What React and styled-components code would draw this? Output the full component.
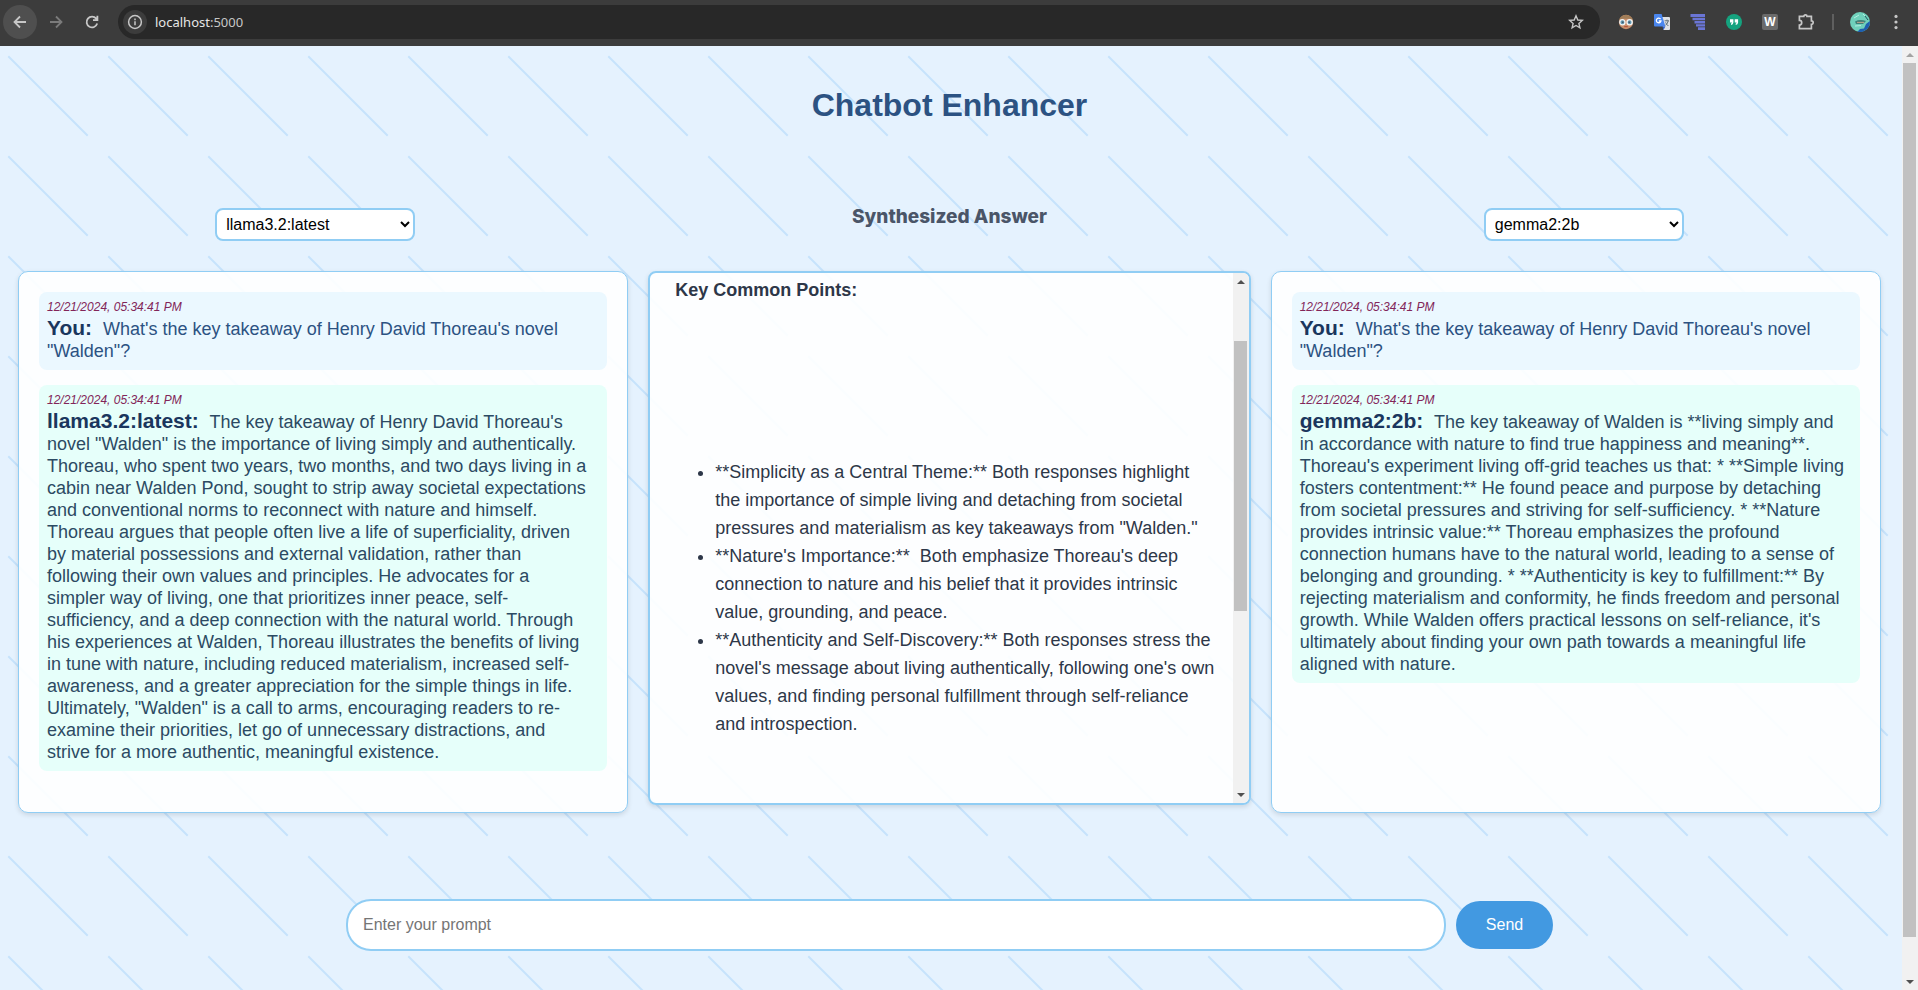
import React from "react";
import styled, { createGlobalStyle, css } from "styled-components";

const tile = encodeURIComponent(
  '<svg xmlns="http://www.w3.org/2000/svg" width="100" height="100"><path d="M9 11L87 89" stroke="#c6e3fc" stroke-width="2" stroke-linecap="square" fill="none"/></svg>'
);

const Global = createGlobalStyle`
  *, *::before, *::after { box-sizing: border-box; }
  body { margin: 0; font-family: "Liberation Sans", Arial, sans-serif; }
  h1, h2, h3, p, ul { margin: 0; padding: 0; }
  button, input, select { font-family: inherit; }
`;

const Window = styled.div`
  height: 100vh;
  display: flex;
  flex-direction: column;
  overflow: hidden;
`;

const Toolbar = styled.header`
  flex: none;
  height: 46px;
  padding: 5px 4px 7px 3px;
  display: flex;
  align-items: center;
  background: #3c3c3c;
  color: #c7c7c7;
`;

const NavButton = styled.button`
  width: 34px;
  height: 34px;
  margin-right: 2px;
  padding: 0;
  border: 0;
  border-radius: 17px;
  display: grid;
  place-items: center;
  background: ${(p) => (p.$active ? "#4f4f4f" : "transparent")};
  color: ${(p) => (p.$muted ? "#7b7b7b" : "#c7c7c7")};
`;

const AddressBar = styled.div`
  flex: 1;
  height: 34px;
  margin: 0 8px 0 7px;
  padding: 0 6px 0 5px;
  display: flex;
  align-items: center;
  gap: 8px;
  border-radius: 17px;
  background: #282828;
`;

const SiteInfo = styled.button`
  width: 24px;
  height: 24px;
  padding: 0;
  border: 0;
  border-radius: 12px;
  display: grid;
  place-items: center;
  background: #3c3c3c;
  color: #c7c7c7;
`;

const Url = styled.span`
  flex: 1;
  font: 13px/18px "Noto Sans", sans-serif;
  color: #e6e6e6;
  span { color: #c7c7c7; }
`;

const ToolButton = styled.button`
  width: 36px;
  height: 34px;
  padding: 0;
  border: 0;
  display: grid;
  place-items: center;
  background: transparent;
  color: #c7c7c7;
`;

const Divider = styled.span`
  width: 2px;
  height: 16px;
  margin: 0 8px;
  background: #5f5f5f;
`;

const Viewport = styled.div`
  flex: 1;
  min-height: 0;
  display: flex;
`;

const Page = styled.main`
  flex: 1;
  min-width: 0;
  overflow: hidden;
  padding: 41px 21px 39px 18px;
  background: #e5f2fe url("data:image/svg+xml,${tile}");
`;

const Title = styled.h1`
  font-size: 32px;
  line-height: 36px;
  text-align: center;
  color: #2c5282;
`;

const Headings = styled.div`
  display: grid;
  grid-template-columns: repeat(3, minmax(0, 1fr));
  gap: 40px;
  justify-items: center;
  align-items: start;
  margin-top: 85px;
`;

const ModelSelect = styled.select`
  width: 200px;
  height: 33px;
  padding: 4px 4px 4px 5px;
  border: 2px solid #90cdf4;
  border-radius: 8px;
  background-color: #fff;
  color: #000;
  font-size: 16px;
`;

const Subtitle = styled.h2`
  font-family: Inter, "Liberation Sans", sans-serif;
  font-size: 19px;
  font-weight: 800;
  line-height: 18px;
  color: #4a5568;
`;

const Panels = styled.div`
  display: grid;
  grid-template-columns: minmax(0, 76fr) minmax(0, 75fr) minmax(0, 76fr);
  gap: 20px;
  align-items: start;
  margin-top: 30px;
`;

const panel = css`
  background: rgba(255, 255, 255, 0.9);
  border-color: #90cdf4;
  border-style: solid;
  box-shadow: 0 2px 5px rgba(0, 0, 0, 0.12);
`;

const ChatPanel = styled.section`
  ${panel}
  min-height: 542px;
  padding: 20px;
  border-width: 1px;
  border-radius: 10px;
  display: flex;
  flex-direction: column;
  gap: 15px;
`;

const Message = styled.article`
  padding: 8px 15px 8px 8px;
  border-radius: 8px;
  background: ${(p) => (p.$user ? "#ebf8ff" : "#e6fffa")};
  color: ${(p) => (p.$user ? "#2c5282" : "#2c4a63")};
  font-size: 18px;
  line-height: 22px;
`;

const Stamp = styled.time`
  display: block;
  margin-bottom: 3px;
  font-size: 12px;
  font-style: italic;
  line-height: 15px;
  color: #822659;
`;

const Sender = styled.strong`
  margin-right: 6px;
  font-size: 21px;
  line-height: 16px;
  color: #1a365d;
`;

const AnswerPanel = styled.section`
  ${panel}
  height: 534px;
  border-width: 2px;
  border-radius: 8px;
  display: flex;
  overflow: hidden;
`;

const Answer = styled.div`
  flex: 1;
  padding: 3px 14px 0 25px;
  font-size: 18px;
  line-height: 28px;
  color: #2d3748;
`;

const AnswerHeading = styled.h3`
  font-size: 18px;
  line-height: 28px;
`;

const Points = styled.ul`
  margin-top: 154px;
  padding-left: 40px;
`;

const ScrollTrack = styled.div`
  flex: none;
  width: 16px;
  display: flex;
  flex-direction: column;
  background: #f1f1f1;
`;

const Arrow = styled.span`
  flex: none;
  height: 17px;
  display: grid;
  place-items: center;
  &::before {
    content: "";
    border: 4px solid transparent;
    border-top-width: ${(p) => (p.$up ? 0 : 4)}px;
    border-bottom-width: ${(p) => (p.$up ? 4 : 0)}px;
    border-top-color: ${(p) => (p.$dim ? "#a3a3a3" : "#505050")};
    border-bottom-color: ${(p) => (p.$dim ? "#a3a3a3" : "#505050")};
  }
`;

const Space = styled.span`
  flex: ${(p) => p.$share} 1 0;
`;

const Thumb = styled.span`
  flex: ${(p) => p.$share} 1 0;
  margin: 0 2px 0 1px;
  background: #c1c1c1;
`;

const PromptForm = styled.form`
  max-width: 1207px;
  margin: 86px auto 0;
  display: flex;
  align-items: center;
  gap: 10px;
`;

const PromptInput = styled.input`
  flex: 1;
  min-width: 0;
  height: 52px;
  padding: 0 15px;
  border: 2px solid #90cdf4;
  border-radius: 25px;
  background: #fff;
  font-size: 16px;
  &::placeholder { color: #757575; }
`;

const SendButton = styled.button`
  width: 97px;
  height: 48px;
  border: 0;
  border-radius: 24px;
  background: #4299e1;
  color: #fff;
  font-size: 16px;
`;

const line = { fill: "none", stroke: "currentColor", strokeWidth: 1.8 };

const BackIcon = () => (
  <svg width="16" height="16" viewBox="0 0 16 16" {...line}>
    <path d="M14 8H3M8 2.5L2.5 8L8 13.5" />
  </svg>
);
const ForwardIcon = () => (
  <svg width="16" height="16" viewBox="0 0 16 16" {...line}>
    <path d="M2 8H13M8 2.5L13.5 8L8 13.5" />
  </svg>
);
const ReloadIcon = () => (
  <svg width="16" height="16" viewBox="0 0 16 16" {...line}>
    <path d="M13.2 9.6A5.4 5.4 0 1 1 12.2 4.6L13.6 6M13.4 1.8V6.2H9" />
  </svg>
);
const InfoIcon = () => (
  <svg width="16" height="16" viewBox="0 0 16 16" fill="none" stroke="currentColor" strokeWidth="1.5">
    <circle cx="8" cy="8" r="6.4" />
    <path d="M8 7.2V11.2M8 4.6V6.2" />
  </svg>
);
const StarIcon = () => (
  <svg width="16" height="16" viewBox="0 0 16 16" fill="none" stroke="currentColor" strokeWidth="1.4">
    <path d="M8 1.8L9.8 6L14.3 6.4L10.9 9.4L11.9 13.9L8 11.5L4.1 13.9L5.1 9.4L1.7 6.4L6.2 6Z" />
  </svg>
);
const FaceIcon = () => (
  <svg width="16" height="16" viewBox="0 0 16 16">
    <circle cx="8" cy="8" r="7.2" fill="#c98f6c" />
    <path d="M1 6.6A7.2 7.2 0 0 1 15 6.6L12 4.8H4Z" fill="#a07d58" />
    <circle cx="4.4" cy="8.2" r="2.6" fill="#5f95b0" stroke="#f4f4f4" strokeWidth="1.3" />
    <circle cx="11.6" cy="8.2" r="2.6" fill="#5f95b0" stroke="#f4f4f4" strokeWidth="1.3" />
    <circle cx="4.8" cy="8.2" r="0.8" fill="#3a4a55" />
    <circle cx="11.2" cy="8.2" r="0.8" fill="#3a4a55" />
    <path d="M6.2 12.6H9.8" stroke="#b5533c" strokeWidth="1.1" />
  </svg>
);
const TranslateIcon = () => (
  <svg width="16" height="16" viewBox="0 0 16 16">
    <path d="M7 3H15Q16 3 16 4V15Q16 16 15 16H9.5Z" fill="#dfe1e5" />
    <path d="M1 0H7.6L11.4 12.5H1Q0 12.5 0 11.5V1Q0 0 1 0Z" fill="#4a86ee" />
    <path d="M8.5 12.5H11.4L9.5 16Z" fill="#2f5fc4" />
    <path d="M6.6 5.2A2.3 2.3 0 1 0 6.9 7H4.8" fill="none" stroke="#fff" strokeWidth="1.3" />
    <path d="M10.6 6.8H15M13 5.6V6.8M14.2 7Q13.6 9.8 11.4 11.4M11.6 8.4Q12.6 10.6 14.4 12" fill="none" stroke="#607078" strokeWidth="1" />
  </svg>
);
const BarsIcon = () => (
  <svg width="16" height="16" viewBox="0 0 16 16" fill="#6a75d6">
    <path d="M0.5 0H15V3H0.5ZM2.5 3.8H15V6.2H2.5ZM4.5 7H15V9.4H4.5ZM6 10.2H15V12.4H6ZM8 13.2H15V16H8Z" />
  </svg>
);
const QuoteIcon = () => (
  <svg width="16" height="16" viewBox="0 0 16 16">
    <circle cx="8" cy="8" r="8" fill="#15a37f" />
    <path d="M4 5.2H7.4V8.4Q7.2 10.4 5 10.9V9.6Q5.8 9.3 5.9 8.4H4ZM8.7 5.2H12.1V8.4Q11.9 10.4 9.7 10.9V9.6Q10.5 9.3 10.6 8.4H8.7Z" fill="#fff" />
  </svg>
);
const PuzzleIcon = () => (
  <svg width="18" height="18" viewBox="0 0 18 18" fill="none" stroke="currentColor" strokeWidth="1.7">
    <path d="M2.4 3.4H6.8A1.6 1.6 0 0 1 10 3.4H14.4V7.8A1.6 1.6 0 0 1 14.4 11.4V15.6H2.4V12A2.3 2.3 0 0 0 2.4 7.4Z" />
  </svg>
);
const AvatarIcon = () => (
  <svg width="20" height="20" viewBox="0 0 20 20">
    <circle cx="10" cy="10" r="10" fill="#6fd0bb" />
    <path d="M19.9 9A10 10 0 0 1 7.5 19.7L10 17L14 16.5L16 12Z" fill="#1d5fb0" />
    <path d="M5 9.5Q10 7 16 9L13 12H6Z" fill="#3f7f78" />
    <path d="M7 10.4H14" stroke="#b9a98e" strokeWidth="1" />
    <path d="M4 6L9 3M13 2L16 5M5 14L11 13.6" stroke="#b4efe2" strokeWidth="1" />
    <path d="M15 4L18 8" stroke="#1f4f5c" strokeWidth="1" />
  </svg>
);
const DotsIcon = () => (
  <svg width="4" height="16" viewBox="0 0 4 16" fill="currentColor">
    <circle cx="2" cy="2.4" r="1.6" />
    <circle cx="2" cy="8" r="1.6" />
    <circle cx="2" cy="13.6" r="1.6" />
  </svg>
);

const LetterBadge = styled.span`
  width: 16px;
  height: 16px;
  border-radius: 2px;
  background: #6b6b6b;
  color: #fff;
  font: bold 12px/16px "Liberation Sans", sans-serif;
  text-align: center;
`;

const time = "12/21/2024, 05:34:41 PM";
const question = `What's the key takeaway of Henry David Thoreau's novel "Walden"?`;

const llamaReply = `The key takeaway of Henry David Thoreau's novel "Walden" is the importance of living simply and authentically. Thoreau, who spent two years, two months, and two days living in a cabin near Walden Pond, sought to strip away societal expectations and conventional norms to reconnect with nature and himself. Thoreau argues that people often live a life of superficiality, driven by material possessions and external validation, rather than following their own values and principles. He advocates for a simpler\u00a0way of living, one that prioritizes inner peace, self-sufficiency, and a deep connection with the natural world. Through his experiences at Walden, Thoreau illustrates the benefits of living in tune with nature, including reduced materialism, increased self-awareness, and a greater appreciation for the simple things in life. Ultimately, "Walden" is a call to arms, encouraging readers to re-examine their priorities, let go of unnecessary distractions, and strive for a more authentic, meaningful existence.`;

const gemmaReply = `The key takeaway of Walden is **living simply and in accordance with nature to find true happiness and meaning**. Thoreau's experiment living off-grid teaches us that: * **Simple living fosters contentment:** He found peace and purpose by detaching from societal pressures and striving for self-sufficiency. * **Nature provides intrinsic value:** Thoreau emphasizes the profound connection humans have to the natural world, leading to a sense of belonging and grounding. * **Authenticity is key to fulfillment:** By rejecting materialism and conformity, he finds freedom and personal growth. While Walden offers practical lessons on self-reliance, it's ultimately about finding your own path towards a meaningful life aligned with nature.`;

const points = [
  `**Simplicity as a Central Theme:** Both responses highlight the importance of simple living and detaching from societal pressures and materialism as key takeaways from "Walden."`,
  `**Nature's Importance:**\u00a0 Both emphasize Thoreau's deep connection to nature and his belief that it provides intrinsic value, grounding, and peace.`,
  `**Authenticity and Self-Discovery:** Both responses stress the novel's message about living authentically, following one's own values, and finding personal fulfillment through self-reliance and introspection.`,
];

function ChatMessage({ sender, text, user }) {
  return (
    <Message $user={user}>
      <Stamp>{time}</Stamp>
      <p>
        <Sender>{`${sender}:`}</Sender>
        {` ${text}`}
      </p>
    </Message>
  );
}

function Chat({ model, reply }) {
  return (
    <ChatPanel>
      <ChatMessage user sender="You" text={question} />
      <ChatMessage sender={model} text={reply} />
    </ChatPanel>
  );
}

function ScrollBar({ before, thumb, after, atTop }) {
  return (
    <ScrollTrack aria-hidden="true">
      <Arrow $up $dim={atTop} />
      <Space $share={before} />
      <Thumb $share={thumb} />
      <Space $share={after} />
      <Arrow />
    </ScrollTrack>
  );
}

export default function App() {
  return (
    <Window>
      <Global />
      <Toolbar>
        <NavButton $active aria-label="Back"><BackIcon /></NavButton>
        <NavButton $muted aria-label="Forward"><ForwardIcon /></NavButton>
        <NavButton aria-label="Reload"><ReloadIcon /></NavButton>
        <AddressBar>
          <SiteInfo aria-label="Site information"><InfoIcon /></SiteInfo>
          <Url>localhost<span>:5000</span></Url>
          <ToolButton aria-label="Bookmark"><StarIcon /></ToolButton>
        </AddressBar>
        <ToolButton aria-label="Face extension"><FaceIcon /></ToolButton>
        <ToolButton aria-label="Translate"><TranslateIcon /></ToolButton>
        <ToolButton aria-label="Bars extension"><BarsIcon /></ToolButton>
        <ToolButton aria-label="Quotes extension"><QuoteIcon /></ToolButton>
        <ToolButton aria-label="W extension"><LetterBadge>W</LetterBadge></ToolButton>
        <ToolButton aria-label="Extensions"><PuzzleIcon /></ToolButton>
        <Divider />
        <ToolButton aria-label="Profile"><AvatarIcon /></ToolButton>
        <ToolButton aria-label="Menu"><DotsIcon /></ToolButton>
      </Toolbar>
      <Viewport>
        <Page>
          <Title>Chatbot Enhancer</Title>
          <Headings>
            <ModelSelect aria-label="First model" defaultValue="llama3.2:latest">
              <option>llama3.2:latest</option>
              <option>gemma2:2b</option>
            </ModelSelect>
            <Subtitle>Synthesized Answer</Subtitle>
            <ModelSelect aria-label="Second model" defaultValue="gemma2:2b">
              <option>llama3.2:latest</option>
              <option>gemma2:2b</option>
            </ModelSelect>
          </Headings>
          <Panels>
            <Chat model="llama3.2:latest" reply={llamaReply} />
            <AnswerPanel>
              <Answer>
                <AnswerHeading>Key Common Points:</AnswerHeading>
                <Points>
                  {points.map((point) => (
                    <li key={point}>{point}</li>
                  ))}
                </Points>
              </Answer>
              <ScrollBar before={51} thumb={270} after={175} />
            </AnswerPanel>
            <Chat model="gemma2:2b" reply={gemmaReply} />
          </Panels>
          <PromptForm onSubmit={(e) => e.preventDefault()}>
            <PromptInput type="text" aria-label="Prompt" placeholder="Enter your prompt" />
            <SendButton type="submit">Send</SendButton>
          </PromptForm>
        </Page>
        <ScrollBar atTop before={0} thumb={874} after={36} />
      </Viewport>
    </Window>
  );
}
